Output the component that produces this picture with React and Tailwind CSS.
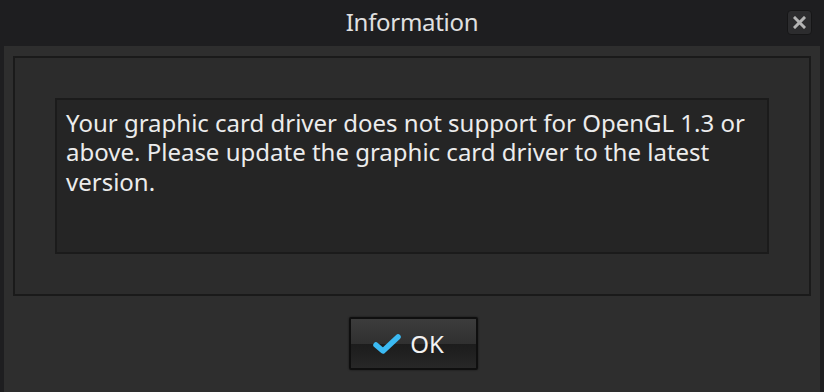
import React from "react";

const font = { fontFamily: '"Noto Sans", "Noto Sans CJK KR", sans-serif' };

const CloseButton = () => (
  <button className="absolute right-[12px] top-[10px] w-[25px] h-[25px] rounded-[4px] bg-[#2c2c2e] border border-[#161617] flex items-center justify-center">
    <svg width="13" height="13" viewBox="0 0 13 13">
      <path d="M2 2 L11 11 M11 2 L2 11" stroke="#b4b4b4" strokeWidth="3" strokeLinecap="square" />
    </svg>
  </button>
);

const OkButton = () => (
  <button className="w-[129px] h-[53px] border-2 border-[#0f0f0f] rounded-[2px] flex flex-col overflow-hidden relative shadow-[0_0_2px_rgba(0,0,0,0.6)]">
    <div className="h-1/2 w-full bg-gradient-to-b from-[#3c3c3c] to-[#303030]" />
    <div className="h-1/2 w-full bg-gradient-to-b from-[#1c1c1c] to-[#272727]" />
    <div className="absolute inset-0 flex items-center justify-center gap-[8px] pr-[10px]">
      <svg width="30" height="22" viewBox="0 0 30 22">
        <path d="M4 12 L11 18 L26 4" fill="none" stroke="#3bbaf3" strokeWidth="5.5" strokeLinecap="round" strokeLinejoin="round" />
      </svg>
      <span className="text-[24px] text-[#f2f2f2] leading-none" style={font}>OK</span>
    </div>
  </button>
);

const lines = [
  "Your graphic card driver does not support for OpenGL 1.3 or",
  "above. Please update the graphic card driver to the latest",
  "version.",
];

export default function App() {
  return (
    <div className="w-[824px] h-[392px] bg-[#1e1e20] flex flex-col overflow-hidden" style={font}>
      {/* title bar */}
      <div className="h-[46px] relative flex items-center justify-center pb-[2px]">
        <span className="text-[24px] text-[#e0e0e0] tracking-[-0.3px]">Information</span>
        <CloseButton />
      </div>

      {/* body */}
      <div className="flex-1 mx-[4px] bg-[#2e2e2e] px-[9px] pt-[10px] flex flex-col">
        <div className="h-[240px] border-2 border-[#1a1a1a] bg-[#2c2c2c] p-[40px]">
          <div className="h-full border-2 border-[#1b1b1b] bg-[#252525] pl-[9px] pt-[8px] flex flex-col">
            {lines.map((l) => (
              <div key={l} className="h-[29.5px] flex items-center text-[24px] leading-none text-[#ececec] whitespace-nowrap">
                {l}
              </div>
            ))}
          </div>
        </div>
        <div className="flex justify-center pt-[21px] pl-[2px]">
          <OkButton />
        </div>
      </div>
    </div>
  );
}
